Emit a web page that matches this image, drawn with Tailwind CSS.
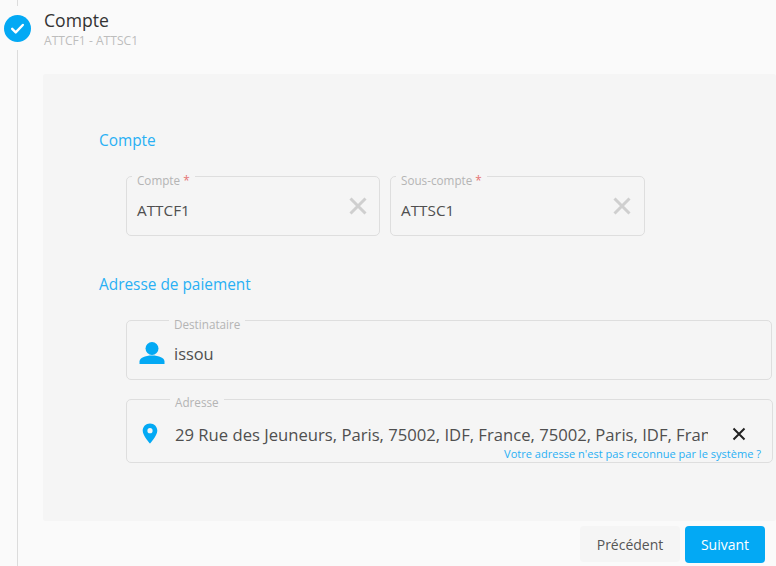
<!DOCTYPE html>
<html lang="fr">
<head>
    <meta charset="UTF-8">
    <title>Compte</title>
    <script src="https://cdn.jsdelivr.net/npm/@tailwindcss/browser@4"></script>
</head>
<body class="bg-[#fafafa]">
    <div class="h-[566px] w-[776px] overflow-hidden flex font-['Open_Sans',sans-serif] text-[#4f4f4f]">
        <!-- stepper rail -->
        <div class="w-[43px] shrink-0">
            <div class="w-[35px] h-full flex flex-col items-center">
                <div class="w-px h-[6px] bg-[#dcdcdc]"></div>
                <div class="w-[27px] h-[27px] mt-[9px] mb-[8px] rounded-full bg-[#03a9f4] flex items-center justify-center">
                    <svg class="w-[17px] h-[17px]" viewBox="0 0 24 24" fill="none" stroke="#fff" stroke-width="3.4" stroke-linecap="round" stroke-linejoin="round"><path d="M4.5 12.5l5 5L19.5 7"/></svg>
                </div>
                <div class="w-px flex-1 bg-[#dcdcdc]"></div>
            </div>
        </div>

        <div class="flex-1 min-w-0 flex flex-col">
            <div class="h-[74px] pt-[8px] pl-px">
                <div class="text-[17.6px] leading-[24px] text-[#333]">Compte</div>
                <div class="text-[12.1px] leading-[17px] text-[#bdbdbd]">ATTCF1 - ATTSC1</div>
            </div>

            <div class="h-[447px] bg-[#f5f5f5] pl-[56px] pt-[56px] rounded-[2px]">
                <h3 class="text-[15.4px] leading-[22px] text-[#29b0f4]">Compte</h3>
                <div class="flex gap-[10px] ml-[27px] mt-[24px]">
                    <div class="relative w-[254px] h-[60px] border border-[#dedede] rounded-[5px] flex items-center justify-between pl-[10px] pr-[11px]">
                        <span class="absolute -top-[4px] left-[5px] bg-[#f5f5f5] px-[5px] text-[11.7px] leading-[14px] text-[#b4b4b4]">Compte <span class="text-[#e57373]">*</span></span>
                        <span class="text-[15.3px] mt-[8px]">ATTCF1</span>
                        <svg class="w-[20px] h-[20px] -mt-[1px]" viewBox="0 0 20 20" fill="none" stroke="#cfcfcf" stroke-width="3"><path d="M2.5 2.5l15 15M17.500 2.500l-15 15"/></svg>
                    </div>
                    <div class="relative w-[255px] h-[60px] border border-[#dedede] rounded-[5px] flex items-center justify-between pl-[10px] pr-[12px]">
                        <span class="absolute -top-[4px] left-[5px] bg-[#f5f5f5] px-[5px] text-[11.7px] leading-[14px] text-[#b4b4b4]">Sous-compte <span class="text-[#e57373]">*</span></span>
                        <span class="text-[15.3px] mt-[8px]">ATTSC1</span>
                        <svg class="w-[20px] h-[20px] -mt-[1px]" viewBox="0 0 20 20" fill="none" stroke="#cfcfcf" stroke-width="3"><path d="M2.5 2.500l15 15M17.500 2.500l-15 15"/></svg>
                    </div>
                </div>

                <h3 class="text-[15.4px] leading-[22px] text-[#29b0f4] mt-[38px]">Adresse de paiement</h3>
                <div class="ml-[27px] mt-[24px] w-[647px]">
                    <div class="relative w-[646px] h-[60px] border border-[#dedede] rounded-[5px] flex items-center pl-[12px]">
                        <span class="absolute -top-[4px] left-[42px] bg-[#f5f5f5] px-[5px] text-[11.7px] leading-[14px] text-[#b4b4b4]">Destinataire</span>
                        <svg class="w-[26px] h-[26px] mt-[6px] shrink-0" viewBox="0 0 26 26" fill="#03a9f4"><circle cx="13" cy="8.500" r="6.500"/><path d="M0.500 24v-2.500C0.500 18 6 15.500 13 15.500s12.500 2.500 12.500 6V24z"/></svg>
                        <span class="ml-[9px] text-[16.4px] mt-[8px]">issou</span>
                    </div>
                    <div class="relative h-[64px] mt-[19px] border border-[#dedede] rounded-[5px] flex items-center pl-[15px]">
                        <span class="absolute -top-[5px] left-[43px] bg-[#f5f5f5] px-[5px] text-[11.7px] leading-[14px] text-[#b4b4b4]">Adresse</span>
                        <svg class="w-[16px] h-[21px] mt-[4px] shrink-0" viewBox="0 0 16 21" fill="#03a9f4"><path fill-rule="evenodd" d="M8 0.500C3.800 0.500 0.700 3.700 0.700 7.700 0.700 12.500 8 20.500 8 20.500s7.300-8 7.300-12.800C15.300 3.700 12.200 0.500 8 0.500zM8 10.300a2.600 2.600 0 1 1 0-5.200 2.600 2.600 0 0 1 0 5.200z"/></svg>
                        <span class="ml-[17px] w-[533px] overflow-hidden whitespace-nowrap text-[16.65px] mt-[8px]">29 Rue des Jeuneurs, Paris, 75002, IDF, France, 75002, Paris, IDF, France</span>
                        <svg class="w-[14px] h-[14px] ml-[24px] mt-[6px]" viewBox="0 0 14 14" fill="none" stroke="#222" stroke-width="2"><path d="M1.500 1.500l11 11M12.500 1.500l-11 11"/></svg>
                        <a class="absolute right-[11px] bottom-[1px] text-[11.05px] leading-[14px] text-[#29b0f4]">Votre adresse n'est pas reconnue par le système ?</a>
                    </div>
                </div>
            </div>

            <div class="flex justify-end gap-[5px] pr-[11px] pt-[5px]">
                <button class="w-[100px] h-[36px] rounded-[4px] bg-[#f5f5f5] text-[14px] text-[#555]">Précédent</button>
                <button class="w-[80px] h-[37px] rounded-[4px] bg-[#03a9f4] text-[14px] font-medium text-white">Suivant</button>
            </div>
        </div>
    </div>
</body>
</html>
